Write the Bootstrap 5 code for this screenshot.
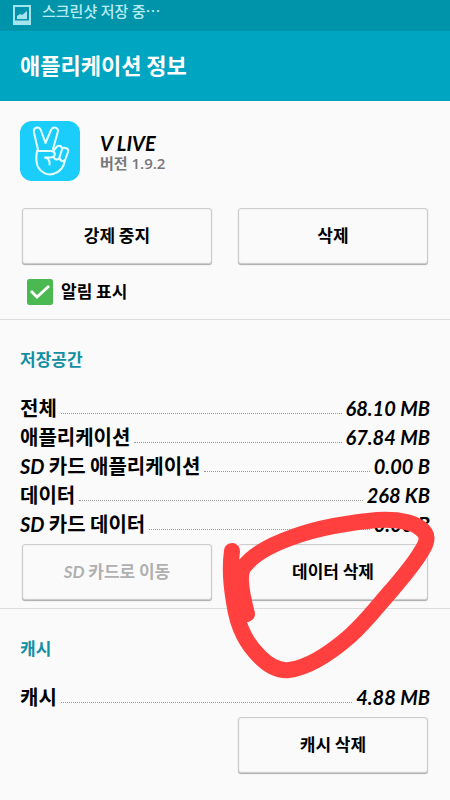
<!DOCTYPE html>
<html lang="ko">
<head>
<meta charset="utf-8">
<meta name="viewport" content="width=device-width, initial-scale=1">
<title>애플리케이션 정보</title>
<link href="https://cdn.jsdelivr.net/npm/bootstrap@5.3.0/dist/css/bootstrap.min.css" rel="stylesheet">
<style>
body{background:#fafafa;color:#000;font-family:Lato,"Noto Sans CJK KR",sans-serif;font-weight:700;font-style:oblique 5deg;overflow-x:hidden}
.status-strip{background:#0094ab;color:#b9ecf4;height:31px;font-size:15px;line-height:22px;font-weight:500;padding:0 12px}
.title-bar{background:#00a5c2;height:70px;padding:0 20px}
.title-bar h1{font-size:22px;line-height:30px;font-weight:700;color:#fff}
.app-head{padding:20px 20px 0;height:107px}
.app-name{font-size:20px;line-height:20px}
.app-version{font-family:"Open Sans","Noto Sans CJK KR",sans-serif;font-size:15px;line-height:20px;color:#777;font-style:normal;font-weight:600}
.pad-buttons{padding:0 22px}
.after-sizes{padding:5px 22px 8px}
.btn-grid{--bs-gutter-x:26px}
.btn-panel{--bs-btn-bg:#fafafa;--bs-btn-color:#000;--bs-btn-border-color:#cdcdcd;--bs-btn-hover-bg:#f0f0f0;--bs-btn-hover-border-color:#bbb;--bs-btn-disabled-bg:#fafafa;--bs-btn-disabled-color:#b0b0b0;--bs-btn-disabled-border-color:#cdcdcd;--bs-btn-disabled-opacity:1;--bs-btn-border-radius:3px;height:56px;font-size:17px;line-height:24px;font-weight:700;font-style:inherit;box-shadow:0 1px 1px #aaa,inset 0 0 1px #ccc}
.notify-row{padding:15px 27px 14px;min-height:0}
.notify-row .form-check-input{width:26px;height:26px;border-radius:3px;border:0;background-color:#fff;outline:1px solid #4bb951;outline-offset:-1px}
.notify-row .form-check-input:checked{background-color:#4bb951;background-size:26px;background-image:url("data:image/svg+xml,%3Csvg xmlns='http://www.w3.org/2000/svg' viewBox='0 0 26 26'%3E%3Cpath d='M4 12l6 6L22 7' fill='none' stroke='white' stroke-width='2.8'/%3E%3C/svg%3E")}
.notify-row label{font-size:17px;line-height:26px}
.block{border-top:1px solid #dcdcdc}
.block h2{font-size:17px;line-height:24px;font-weight:700;color:#118fa3;padding:28px 20px 22px}
.sizes{padding:0 20px;font-size:20px;line-height:29px}
.sizes dt{font-weight:700}
.dots{border-bottom:1px dotted #999;height:20px}
.scribble{top:180px;left:50%;width:226px;height:180px;overflow:visible;pointer-events:none}
</style>
<script src="https://cdn.jsdelivr.net/npm/bootstrap@5.3.0/dist/js/bootstrap.bundle.min.js"></script>
</head>
<body>
<div class="status-strip d-flex gap-2">
  <svg width="22" height="26" viewBox="0 0 22 26" aria-hidden="true"><path d="M2 6H18V24H2Z" fill="none" stroke="#a5e4ee" stroke-width="2"/><path d="M2 22H18" stroke="#a5e4ee" stroke-width="3"/><path d="M5 19V16L8 14L10 15L15 11V19Z" fill="#a5e4ee"/></svg>
  <span>스크린샷 저장 중⋯</span>
</div>
<header class="title-bar d-flex align-items-center"><h1 class="m-0">애플리케이션 정보</h1></header>
<main>
  <section>
    <div class="app-head d-flex">
      <svg class="flex-shrink-0" width="60" height="60" viewBox="0 0 60 60" role="img" aria-label="V LIVE"><rect width="60" height="60" rx="12" fill="#1bcdfb"/><g fill="none" stroke="#e6ffff" stroke-width="2" stroke-linecap="round" stroke-linejoin="round"><path d="M18 29L14 11.500C13 6.500 19 4.500 21 9.500L25.500 22L31 9C33.500 4.500 39.500 7 37.500 12L33 28"/><path d="M17 30C16 36 16 42 18 46C21 51.500 27 54.500 33 53C41 51 44 45 45 39"/><path d="M17 30H31.500C36.500 31 35.500 36 31 36.500H25M25 36.500C28.500 37.500 30 40 29.500 43.500"/><path d="M34 29L36.500 26C38.500 23.500 42.500 25 42 28.500L39.500 36.500C38.500 39.500 34.500 39 34 36"/><path d="M42 28C45 25.500 49 27.500 48 31L45.500 38C44.500 40.500 40.500 41 39.500 37"/></g></svg>
      <div class="pt-2 mt-1 ps-3 ms-1">
        <div class="app-name">V LIVE</div>
        <div class="app-version">버전 1.9.2</div>
      </div>
    </div>
    <div class="pad-buttons"><div class="row btn-grid">
      <div class="col-6"><button type="button" class="btn btn-panel w-100">강제 중지</button></div>
      <div class="col-6"><button type="button" class="btn btn-panel w-100">삭제</button></div>
    </div></div>
    <div class="notify-row form-check d-flex gap-2 m-0">
      <input class="form-check-input m-0 float-none" type="checkbox" id="notify" checked>
      <label for="notify">알림 표시</label>
    </div>
  </section>
  <section class="block position-relative">
    <h2 class="m-0">저장공간</h2>
    <dl class="sizes m-0">
      <div class="d-flex gap-1"><dt>전체</dt><span class="dots flex-grow-1"></span><dd class="m-0">68.10 MB</dd></div>
      <div class="d-flex gap-1"><dt>애플리케이션</dt><span class="dots flex-grow-1"></span><dd class="m-0">67.84 MB</dd></div>
      <div class="d-flex gap-1"><dt>SD 카드 애플리케이션</dt><span class="dots flex-grow-1"></span><dd class="m-0">0.00 B</dd></div>
      <div class="d-flex gap-1"><dt>데이터</dt><span class="dots flex-grow-1"></span><dd class="m-0">268 KB</dd></div>
      <div class="d-flex gap-1"><dt>SD 카드 데이터</dt><span class="dots flex-grow-1"></span><dd class="m-0">0.00 B</dd></div>
    </dl>
    <div class="after-sizes"><div class="row btn-grid">
      <div class="col-6"><button type="button" class="btn btn-panel w-100" disabled>SD 카드로 이동</button></div>
      <div class="col-6"><button type="button" class="btn btn-panel w-100">데이터 삭제</button></div>
    </div></div>
    <svg class="scribble position-absolute z-1" viewBox="225 500 226 180" aria-hidden="true"><path d="M232 551C230 565 231 585 234 602C238 630 248 645 260 657C270 667 280 671 289 670C312 667 334 650 350 636C367 621 380 603 391 591C403 577 414 564 421 552C429 540 428 534 420 528C409 520 394 519 377 520C351 522 317 528 293 537C270 545 252 555 243 568C239 576 241 591 247 614L238 590L234 565" fill="none" stroke="#ff403f" stroke-width="16" stroke-linecap="round" stroke-linejoin="round"/></svg>
  </section>
  <section class="block">
    <h2 class="m-0">캐시</h2>
    <dl class="sizes m-0">
      <div class="d-flex gap-1"><dt>캐시</dt><span class="dots flex-grow-1"></span><dd class="m-0">4.88 MB</dd></div>
    </dl>
    <div class="after-sizes"><div class="row btn-grid">
      <div class="col-6 offset-6"><button type="button" class="btn btn-panel w-100">캐시 삭제</button></div>
    </div></div>
  </section>
</main>
</body>
</html>
